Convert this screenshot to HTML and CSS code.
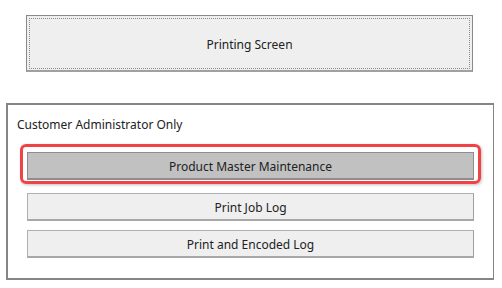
FILE: index.html
```html
<!DOCTYPE html>
<html>
<head>
<meta charset="utf-8">
<link rel="stylesheet" href="styles.css">
</head>
<body>
<div class="page">
  <div class="btn btn-main">Printing Screen</div>
  <div class="group">
    <div class="group-label">Customer Administrator Only</div>
    <div class="group-buttons">
      <div class="highlight-wrap">
        <div class="btn btn-row btn-pressed">Product Master Maintenance</div>
      </div>
      <div class="btn btn-row btn-job">Print Job Log</div>
      <div class="btn btn-row btn-enc">Print and Encoded Log</div>
    </div>
  </div>
</div>
</body>
</html>
```
FILE: styles.css
```css
* { box-sizing: border-box; }
html, body { margin: 0; padding: 0; background: #ffffff; }
body {
  width: 502px;
  height: 288px;
  overflow: hidden;
  font-family: "Noto Sans", "Open Sans", sans-serif;
  font-size: 12px;
  color: #222222;
}
.page {
  display: flex;
  flex-direction: column;
  padding-top: 15px;
}
.btn {
  display: flex;
  align-items: center;
  justify-content: center;
  background: #efefef;
}
.btn-main {
  margin-left: 26px;
  width: 447px;
  height: 57px;
  border: 1px solid #8a8a8a;
  border-bottom: 2px solid #a0a0a0;
  outline: 1px dotted #8c8c8c;
  outline-offset: -4px;
  padding-top: 2px;
}
.group {
  margin-top: 31px;
  margin-left: 6px;
  width: 488px;
  height: 177px;
  border: 2px solid #858585;
  border-right-width: 1px;
  display: flex;
  flex-direction: column;
}
.group-label {
  padding-left: 9px;
  padding-top: 12px;
  height: 47px;
  line-height: 16px;
}
.group-buttons {
  display: flex;
  flex-direction: column;
  padding-left: 19px;
}
.highlight-wrap {
  position: relative;
  width: 447px;
}
.highlight-wrap::after {
  content: "";
  position: absolute;
  left: -7px;
  right: -7px;
  top: -8px;
  bottom: -4px;
  border: 3px solid #f04346;
  border-radius: 6px;
  box-shadow: 1px 1px 3px rgba(0,0,0,0.25);
  pointer-events: none;
}
.btn-row {
  width: 447px;
  height: 28px;
  padding-top: 2px;
  border: 1px solid #b0b0b0;
  border-right-color: #a0a0a0;
  border-bottom: 2px solid #a8a8a8;
}
.btn-pressed {
  background: #c1c1c1;
  border-color: #8e8e8e;
  border-bottom: 2px solid #8e8e8e;
}
.btn-job { margin-top: 13px; }
.btn-enc { margin-top: 9px; }
```
